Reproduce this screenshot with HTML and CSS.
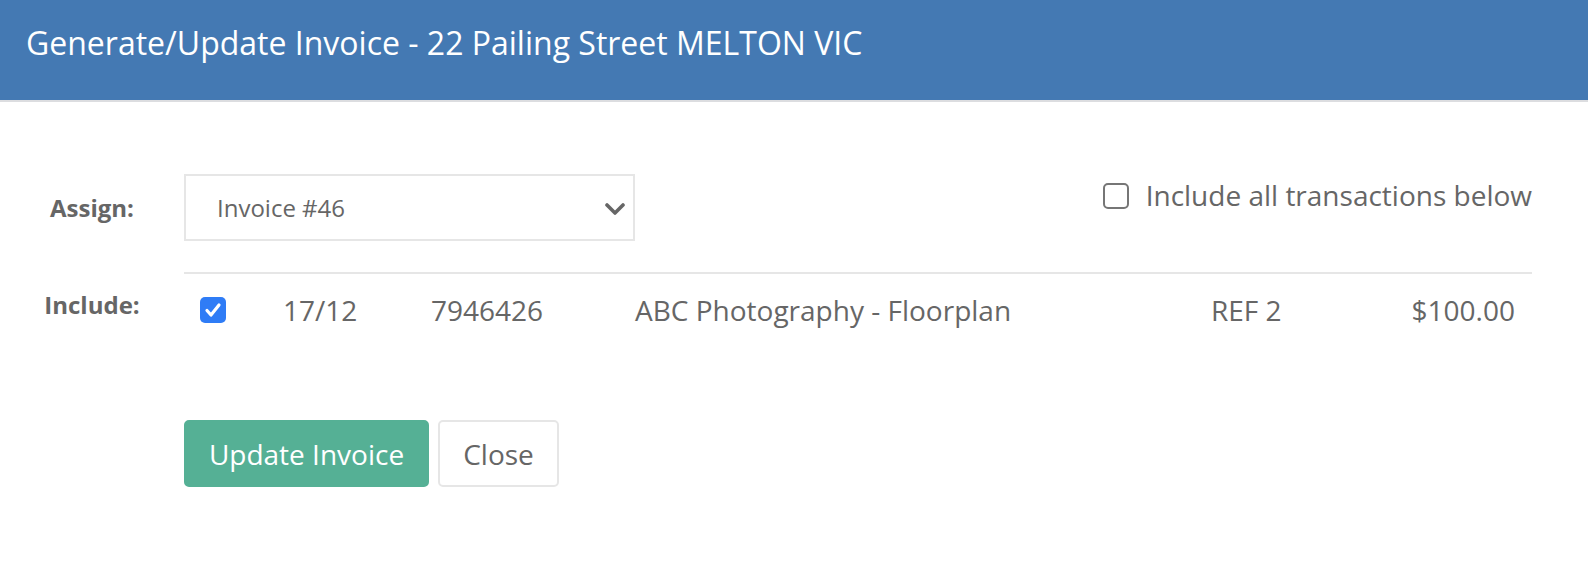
FILE: index.html
```html
<!DOCTYPE html>
<html>
<head>
<meta charset="utf-8">
<link rel="stylesheet" href="styles.css">
</head>
<body>
<div class="modal">
  <div class="modal-header">
    <h4 class="modal-title">Generate/Update Invoice - 22 Pailing Street MELTON VIC</h4>
  </div>
  <div class="modal-body">
    <div class="form-row assign-row">
      <label class="row-label assign-label">Assign:</label>
      <div class="row-content assign-content">
        <div class="select">
          <span class="select-value">Invoice #46</span>
          <svg class="chevron" width="20" height="12" viewBox="0 0 20 12"><polyline points="2,2 10,10 18,2" fill="none" stroke="#666" stroke-width="3.6" stroke-linecap="round" stroke-linejoin="round"/></svg>
        </div>
        <label class="include-all">
          <span class="box"></span>
          <span class="include-all-text">Include all transactions below</span>
        </label>
      </div>
    </div>
    <div class="form-row include-row">
      <label class="row-label include-label">Include:</label>
      <div class="row-content txn-table">
        <div class="txn">
          <span class="box checked"><svg width="26" height="26" viewBox="0 0 26 26"><polyline points="7,13.5 11,18 19,8" fill="none" stroke="#fff" stroke-width="3.2" stroke-linecap="round" stroke-linejoin="round"/></svg></span>
          <span class="cell">17/12</span>
          <span class="cell">7946426</span>
          <span class="cell">ABC Photography - Floorplan</span>
          <span class="cell">REF 2</span>
          <span class="cell amount">$100.00</span>
        </div>
      </div>
    </div>
    <div class="form-row buttons-row">
      <span></span>
      <div class="row-content buttons">
        <button class="btn btn-primary">Update Invoice</button>
        <button class="btn btn-default">Close</button>
      </div>
    </div>
  </div>
</div>
</body>
</html>
```

FILE: styles.css
```css
* { box-sizing: border-box; }
html, body { margin: 0; padding: 0; background: #fff; }
body { font-family: "Open Sans", "Liberation Sans", sans-serif; color: #666; }

.modal-header {
  background: #4479b3;
  height: 102px;
  border-bottom: 2px solid #dcdde0;
  padding: 23px 0 0 26px;
}
.modal-title {
  margin: 0;
  font-size: 32px;
  line-height: 40px;
  font-weight: 400;
  color: #fff;
}

.modal-body {
  padding: 72px 56px 0 0;
}
.form-row {
  display: grid;
  grid-template-columns: 184px 1fr;
}
.row-label {
  text-align: center;
  font-weight: 700;
  font-size: 24px;
  color: #666;
}
.assign-row { align-items: center; }
.assign-content {
  display: flex;
  align-items: flex-start;
}
.select {
  width: 451px;
  height: 67px;
  border: 2px solid #e6e6e6;
  display: flex;
  align-items: center;
  padding: 0 8px 0 31px;
}
.select-value {
  flex: 1;
  font-size: 24px;
  color: #666;
}
.chevron { margin-top: 2px; }

.include-all {
  margin-left: auto;
  margin-top: 9px;
  display: flex;
  align-items: center;
  gap: 17px;
}
.box {
  width: 26px;
  height: 26px;
  border: 2px solid #767676;
  border-radius: 5px;
  display: block;
  flex: none;
}
.box.checked {
  background: #2f7cf6;
  border: none;
}
.box.checked svg { display: block; }
.include-all-text {
  font-size: 28px;
  color: #666;
  line-height: 28px;
  margin-top: -2px;
}

.include-row { margin-top: 31px; }
.include-label {
  padding-top: 16px;
}
.txn-table {
  border-top: 2px solid #e6e6e6;
}
.txn {
  display: grid;
  grid-template-columns: 83px 148px 204px 576px 1fr auto;
  align-items: center;
  padding: 23px 17px 0 16px;
}
.cell {
  font-size: 28px;
  line-height: 26px;
  color: #666;
}
.amount { text-align: right; }

.buttons-row { margin-top: 97px; }
.buttons {
  display: flex;
  gap: 9px;
}
.btn {
  height: 67px;
  font-family: "Open Sans", "Liberation Sans", sans-serif;
  font-size: 28px;
  border-radius: 5px;
  padding: 0 20px;
  cursor: pointer;
}
.btn-primary {
  width: 245px;
  background: #55b095;
  border: 2px solid #55b095;
  color: #fff;
}
.btn-default {
  width: 121px;
  background: #fff;
  border: 2px solid #e6e6e6;
  color: #666;
}
```
